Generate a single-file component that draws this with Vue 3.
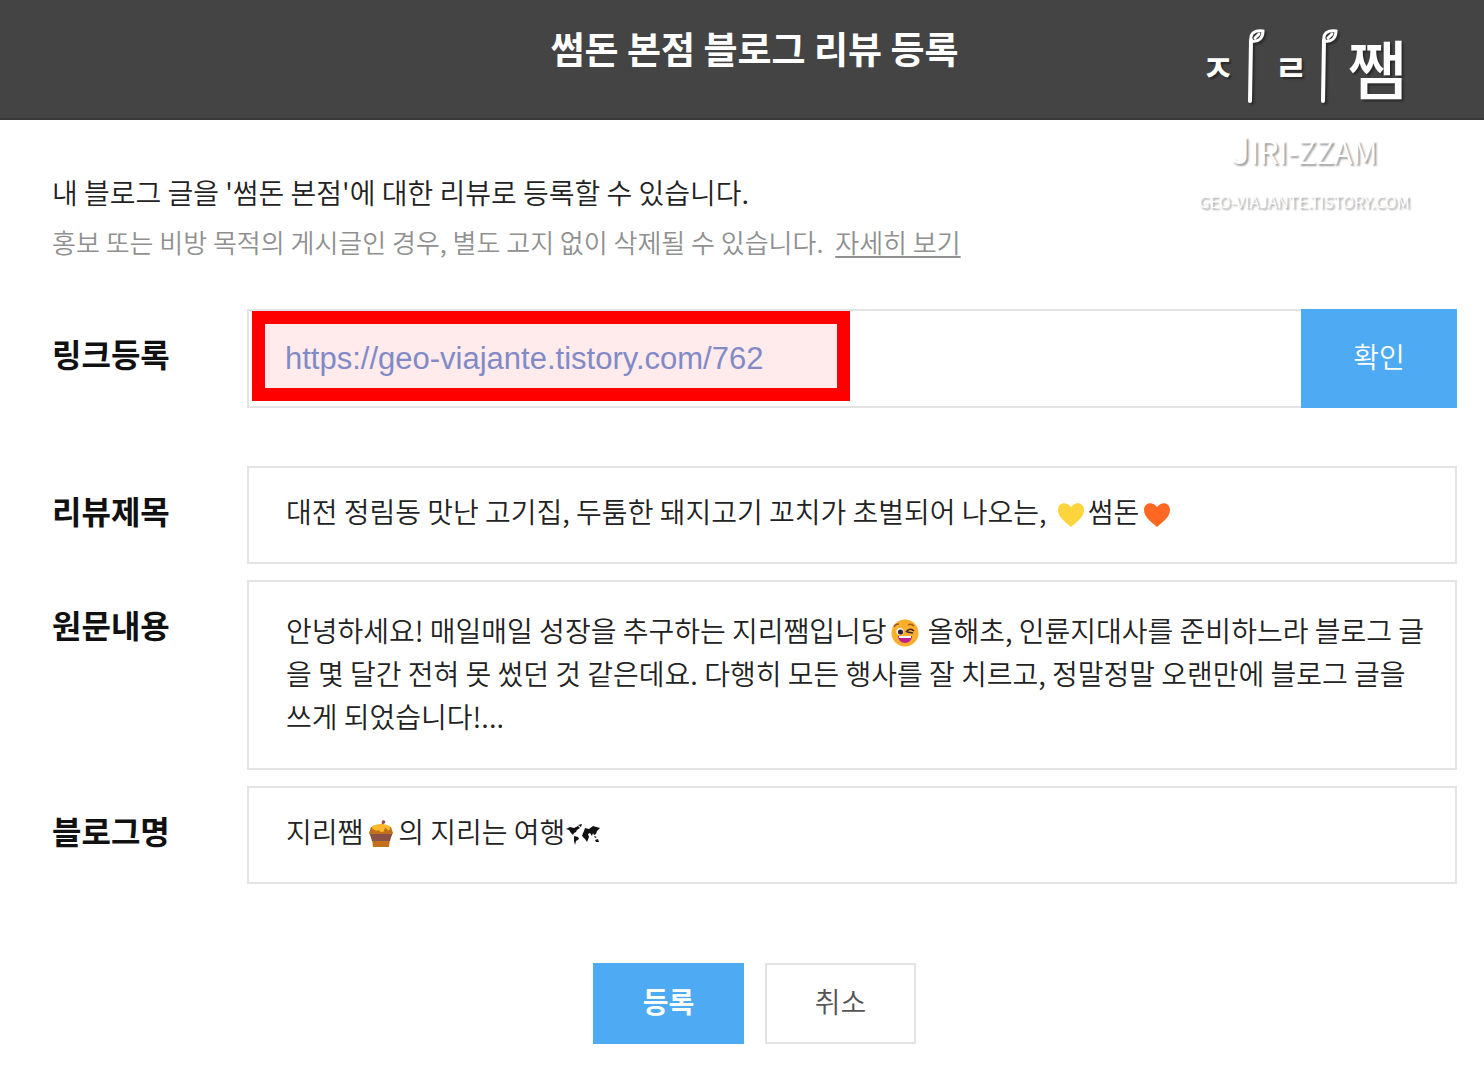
<template>
    <div class="page">
        <header class="header">
            <h1>썸돈 본점 블로그 리뷰 등록</h1>
        </header>

        <div class="watermark">
            <div class="mark">
                <span class="mark-consonant">ㅈ</span>
                <svg class="sprout" viewBox="0 0 20 76" aria-hidden="true">
                    <path d="M5 73 L6 12" />
                    <path class="leaf" d="M6 12 C5 5 10 2 18 3 C18 10 14 14 7 13 M10 10 L14 6" />
                </svg>
                <span class="mark-consonant">ㄹ</span>
                <svg class="sprout" viewBox="0 0 20 76" aria-hidden="true">
                    <path d="M5 73 L6 12" />
                    <path class="leaf" d="M6 12 C5 5 10 2 18 3 C18 10 14 14 7 13 M10 10 L14 6" />
                </svg>
                <span class="mark-syllable">쨈</span>
            </div>
            <div class="mark-name"><span class="mark-initial">J</span>IRI-ZZAM</div>
            <div class="mark-site">GEO-VIAJANTE.TISTORY.COM</div>
        </div>

        <form class="form" @submit.prevent>
            <p class="intro">내 블로그 글을 '썸돈 본점'에 대한 리뷰로 등록할 수 있습니다.</p>
            <p class="notice">
                홍보 또는 비방 목적의 게시글인 경우, 별도 고지 없이 삭제될 수 있습니다.
                <a href="#">자세히 보기</a>
            </p>

            <div class="row row-link">
                <label for="link">링크등록</label>
                <div class="link-field">
                    <input id="link" v-model="link" type="text">
                    <button type="button" class="confirm">확인</button>
                    <div class="highlight"></div>
                </div>
            </div>

            <div class="row">
                <label for="title">리뷰제목</label>
                <output id="title" class="box">대전 정림동 맛난 고기집, 두툼한 돼지고기 꼬치가 초벌되어 나오는, <svg class="emoji" viewBox="0 0 28 28" aria-hidden="true">
                        <path fill="#fdd43b" :d="heart" />
                    </svg>썸돈<svg class="emoji" viewBox="0 0 28 28" aria-hidden="true">
                        <path fill="#ff6723" :d="heart" />
                    </svg></output>
            </div>

            <div class="row">
                <label for="content">원문내용</label>
                <output id="content" class="box box-content">안녕하세요! 매일매일 성장을 추구하는 지리쨈입니당<svg class="emoji" viewBox="0 0 28 28" aria-hidden="true">
                        <circle cx="14" cy="14" r="13.5" fill="#fcae2d" />
                        <circle cx="9" cy="12.5" r="3.6" fill="#fff" />
                        <circle cx="9.5" cy="13" r="2.6" fill="#352233" />
                        <path d="M3 8 Q4 5 8 5 M17 6 Q20 4 23 7" fill="none" stroke="#a15a18" stroke-width="1.4" />
                        <path d="M15 13 Q19 8 23 12 M16 13 L22 14" fill="none" stroke="#402530" stroke-width="1.6" />
                        <path d="M7 17 H21 C21 21 18 24 14 24 C10 24 7 21 7 17Z" fill="#bd2187" />
                        <path d="M8 17 H20 V19 H8Z" fill="#fff" />
                    </svg> 올해초, 인륜지대사를 준비하느라 블로그 글을 몇 달간 전혀 못 썼던 것 같은데요. 다행히 모든 행사를 잘 치르고, 정말정말 오랜만에 블로그 글을 쓰게 되었습니다!...</output>
            </div>

            <div class="row">
                <label for="blog">블로그명</label>
                <output id="blog" class="box">지리쨈<svg class="emoji" viewBox="0 0 28 28" aria-hidden="true">
                        <path d="M15 8 L16 2" stroke="#a56d5b" stroke-width="2" />
                        <circle cx="16.5" cy="2" r="1.8" fill="#8d4c42" />
                        <path d="M4 7 H24 L26 13 L23 19 L22 27 H6 L5 19 L2 13Z" fill="#c3701c" />
                        <path d="M3 14 H25 L23 21 H5Z" fill="#8b5046" />
                        <path d="M5 6 Q14 2 23 6 V9 Q21 12 19 8 Q17 8 17 11 Q14 14 12 10 Q8 12 5 8Z" fill="#fcb92c" />
                    </svg>의 지리는 여행<svg class="map" viewBox="0 0 36 24" aria-hidden="true">
                        <path d="M1 6 L5 4 L9 5 L13 3 L15 5 L12 7 L11 9 L9 10 L8 12 L6 10 L4 7Z" />
                        <path d="M9 13 L13 14 L14 16 L11 18 L10 22 L9 18Z" />
                        <path d="M13 2 L17 1 L16 4Z" />
                        <path d="M19 8 L20 5 L24 6 L28 3 L35 5 L32 8 L31 11 L29 12 L28 10 L27 13 L25 10 L23 11 L24 14 L22 19 L20 16 L17 13 L18 10Z" />
                        <path d="M30 17 L33 16 L34 19 L31 19Z M29 13 L32 14 L30 15Z" />
                    </svg></output>
            </div>

            <div class="actions">
                <button type="submit" class="submit">등록</button>
                <button type="button" class="cancel">취소</button>
            </div>
        </form>
    </div>
</template>

<script setup>
import { ref } from 'vue';

const link = ref('https://geo-viajante.tistory.com/762');

const heart = 'M14 27 C10 23 1 18 1 10 C1 2 10 1 14 7 C18 1 27 2 27 10 C27 18 18 23 14 27Z';
</script>

<style>
body {
    margin: 0;
    background: #fff;
}
</style>

<style scoped>
.page {
    position: relative;
    font-family: 'Noto Sans CJK KR', sans-serif;
    font-size: 28px;
    font-weight: 350;
    line-height: 43px;
    color: #222;
}

.page * {
    box-sizing: border-box;
}

.header {
    height: 120px;
    padding: 20px 27px 0 52px;
    background: #444;
    border-bottom: 2px solid #383838;
}

h1 {
    margin: 0;
    font-size: 37px;
    font-weight: 700;
    line-height: 56px;
    text-align: center;
    color: #fff;
}

/* blog signature laid over the top right corner */
.watermark {
    position: absolute;
    top: 28px;
    right: 70px;
    width: 220px;
    text-align: center;
    white-space: nowrap;
    color: #fff;
    text-shadow: 2px 2px 2px rgba(0, 0, 0, 0.4);
}

.mark {
    display: flex;
    align-items: center;
    justify-content: center;
    gap: 10px;
    height: 76px;
    font-weight: 700;
}

.mark-consonant {
    font-size: 36px;
}

.mark-syllable {
    font-size: 64px;
    font-weight: 500;
    line-height: 76px;
}

.sprout {
    flex: none;
    width: 20px;
    height: 76px;
    fill: none;
    stroke: #fff;
    stroke-width: 4;
    stroke-linecap: round;
    filter: drop-shadow(2px 2px 1px rgba(0, 0, 0, 0.4));
}

.leaf {
    stroke-width: 3;
}

.mark-name {
    margin-top: 20px;
    font-size: 31px;
    line-height: 48px;
}

.mark-initial {
    font-size: 37px;
}

.mark-site {
    font-size: 16px;
    line-height: 52px;
}

.form {
    padding: 51px 27px 21px 52px;
}

.intro,
.notice {
    margin: 0;
}

.notice {
    margin-top: 6px;
    font-size: 26px;
    color: #909090;
}

.notice a {
    margin-left: 6px;
    color: inherit;
    text-underline-offset: 3px;
}

.row {
    display: grid;
    grid-template-columns: 195px 1fr;
    margin-bottom: 16px;
}

.row label {
    font-size: 32px;
    font-weight: 700;
    line-height: 88px;
    color: #111;
}

.row-link {
    margin-top: 46px;
    margin-bottom: 58px;
}

.link-field {
    position: relative;
    display: flex;
}

.link-field input {
    flex: 1;
    min-width: 0;
    height: 99px;
    padding: 0 36px;
    border: 2px solid #e3e3e3;
    border-right: 0;
    outline: none;
    font-family: 'Liberation Sans', Arial, sans-serif;
    font-size: 31px;
    color: #7796d8;
}

.highlight {
    position: absolute;
    top: 2px;
    left: 5px;
    width: 598px;
    height: 90px;
    border: 13px solid #f00;
    background: rgba(255, 0, 0, 0.08);
    pointer-events: none;
}

button {
    font-family: inherit;
    font-size: 28px;
    font-weight: 350;
    line-height: 43px;
    padding: 0 0 4px;
    border: 0;
    color: #fff;
    background: #4eaaf2;
}

.confirm {
    width: 156px;
}

.box {
    display: block;
    min-height: 98px;
    padding: 22px 24px 29px 37px;
    border: 2px solid #e3e3e3;
}

.box-content {
    padding-top: 27px;
    padding-bottom: 30px;
}

.emoji {
    width: 28px;
    height: 28px;
    margin: 0 3px 0 4px;
    vertical-align: -5px;
}

.map {
    width: 36px;
    height: 24px;
    vertical-align: -4px;
    fill: #111;
}

.actions {
    display: flex;
    justify-content: center;
    gap: 21px;
    margin-top: 79px;
}

.actions button {
    width: 151px;
    height: 81px;
}

.actions .submit {
    font-weight: 700;
}

.actions .cancel {
    border: 2px solid #e3e3e3;
    color: #555;
    background: #fff;
}
</style>
